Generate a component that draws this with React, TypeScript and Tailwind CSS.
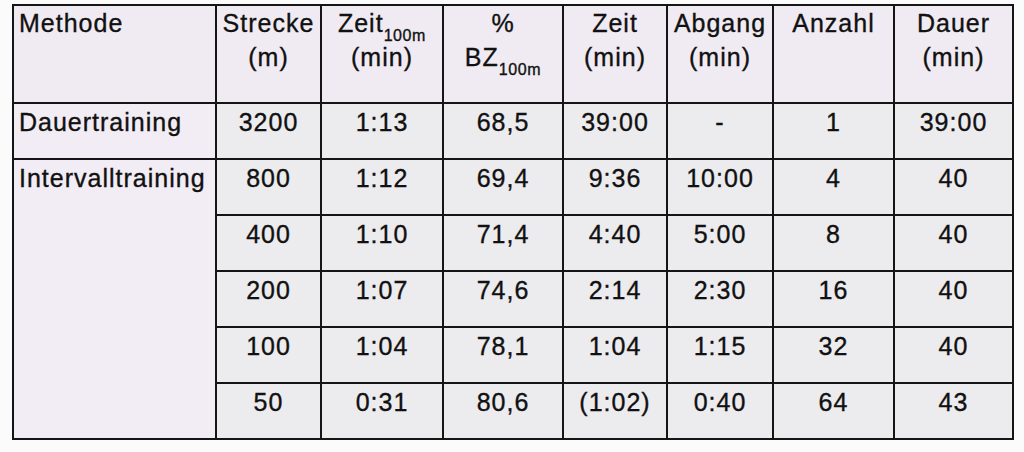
const cols = [203, 105, 122, 120, 104, 106, 121, 119];

const intervals = [
  ['800', '1:12', '69,4', '9:36', '10:00', '4', '40'],
  ['400', '1:10', '71,4', '4:40', '5:00', '8', '40'],
  ['200', '1:07', '74,6', '2:14', '2:30', '16', '40'],
  ['100', '1:04', '78,1', '1:04', '1:15', '32', '40'],
  ['50', '0:31', '80,6', '(1:02)', '0:40', '64', '43'],
];

const th = 'border-2 border-[#151515] bg-[#f0ebf2] align-top text-center font-normal pt-0';
const td = 'border-2 border-[#151515] bg-[#ecebee] align-top text-center pt-[1px]';
const first = 'border-2 border-[#151515] bg-[#f2ecf4] align-top text-left pl-[5px] pt-[1px]';

function Sub({ children }: { children: React.ReactNode }) {
  return <span className="text-[16px] tracking-[0.6px] leading-[0] align-[-9px]">{children}</span>;
}

export default function App() {
  return (
    <div className="w-[1024px] h-[452px] bg-[#fbfbfb] pt-[4px] pl-[12px] font-['Liberation_Sans',Arial,sans-serif]">
      <table className="table-fixed border-collapse w-[1002px] text-[25px] tracking-[1px] leading-[34px] text-[#111] [-webkit-text-stroke:0.35px_#111]">
        <colgroup>
          {cols.map((w, i) => (
            <col key={i} style={{ width: w }} />
          ))}
        </colgroup>
        <thead>
          <tr className="h-[98px]">
            <th className={th + ' text-left pl-[5px]'}>Methode</th>
            <th className={th}>Strecke<br />(m)</th>
            <th className={th}>Zeit<Sub>100m</Sub><br />(min)</th>
            <th className={th}>%<br />BZ<Sub>100m</Sub></th>
            <th className={th}>Zeit<br />(min)</th>
            <th className={th}>Abgang<br />(min)</th>
            <th className={th}>Anzahl</th>
            <th className={th}>Dauer<br />(min)</th>
          </tr>
        </thead>
        <tbody>
          <tr className="h-[56px]">
            <td className={first}>Dauertraining</td>
            {['3200', '1:13', '68,5', '39:00', '-', '1', '39:00'].map((v, i) => (
              <td key={i} className={td}>{v}</td>
            ))}
          </tr>
          {intervals.map((row, r) => (
            <tr key={r} className="h-[56px]">
              {r === 0 && (
                <td rowSpan={5} className={first}>Intervalltraining</td>
              )}
              {row.map((v, i) => (
                <td key={i} className={td}>{v}</td>
              ))}
            </tr>
          ))}
        </tbody>
      </table>
    </div>
  );
}
